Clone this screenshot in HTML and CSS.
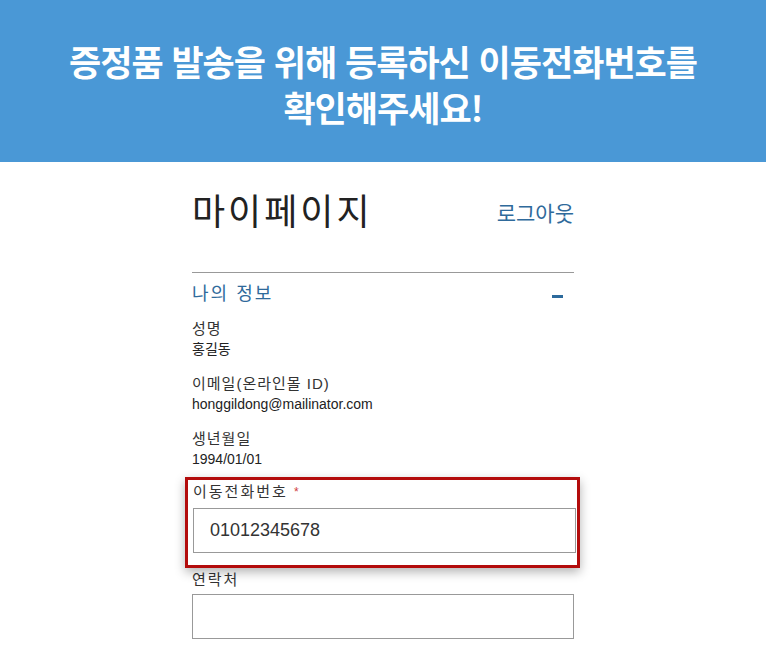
FILE: index.html
```html
<!DOCTYPE html>
<html lang="ko">
<head>
    <meta charset="utf-8">
    <title>마이페이지</title>
    <link rel="stylesheet" href="styles.css">
</head>
<body>
    <div class="banner">
        <h1>증정품 발송을 위해 등록하신 이동전화번호를<br>확인해주세요!</h1>
    </div>

    <div class="container">
        <div class="title-row">
            <h2 class="page-title">마이페이지</h2>
            <a class="logout" href="#">로그아웃</a>
        </div>

        <div class="section-head">
            <span class="section-title">나의 정보</span>
            <span class="toggle"></span>
        </div>

        <div class="info-list">
            <div class="info">
                <div class="info-label">성명</div>
                <div class="info-value">홍길동</div>
            </div>
            <div class="info">
                <div class="info-label">이메일(온라인몰 ID)</div>
                <div class="info-value">honggildong@mailinator.com</div>
            </div>
            <div class="info">
                <div class="info-label">생년월일</div>
                <div class="info-value">1994/01/01</div>
            </div>
        </div>

        <div class="field highlight">
            <label for="mobile">이동전화번호 <span class="required">*</span></label>
            <input type="text" id="mobile" value="01012345678">
        </div>

        <div class="field">
            <label for="phone">연락처</label>
            <input type="text" id="phone">
        </div>
    </div>
</body>
</html>
```

FILE: styles.css
```css
body {
    margin: 0;
    font-family: "Liberation Sans", "Noto Sans CJK KR", sans-serif;
    background-color: #ffffff;
    color: #333333;
}

.banner {
    background-color: #4a98d6;
    height: 162px;
    box-sizing: border-box;
    padding-top: 38px;
}

.banner h1 {
    margin: 0;
    color: #ffffff;
    font-family: "Noto Sans CJK KR", sans-serif;
    font-size: 35px;
    font-weight: 700;
    line-height: 46px;
    letter-spacing: -1px;
    text-align: center;
}

.container {
    width: 382px;
    margin: 0 auto;
}

.title-row {
    display: flex;
    justify-content: space-between;
    align-items: center;
    margin-top: 22px;
    padding-bottom: 38px;
    border-bottom: 1px solid #999999;
}

.page-title {
    margin: 0;
    font-family: "Noto Sans CJK KR", sans-serif;
    font-size: 36px;
    font-weight: 400;
    line-height: 50px;
    letter-spacing: 3px;
    color: #222222;
}

.logout {
    margin-top: 6px;
    font-family: "Noto Sans CJK KR", sans-serif;
    font-size: 21px;
    color: #2f6a9b;
    text-decoration: none;
}

.section-head {
    display: flex;
    justify-content: space-between;
    align-items: center;
    margin-top: 6px;
    line-height: 26px;
}

.section-title {
    font-family: "Noto Sans CJK KR", sans-serif;
    font-size: 18px;
    letter-spacing: 2px;
    color: #2f6a9b;
}

.toggle {
    width: 11px;
    height: 3px;
    margin-right: 11px;
    margin-top: 8px;
    background-color: #2c6a9c;
}

.info-list {
    margin-top: 14px;
}

.info {
    margin-bottom: 15px;
}

.info-label {
    font-size: 15px;
    line-height: 20px;
    letter-spacing: 1px;
    color: #333333;
}

.info-value {
    font-size: 14px;
    line-height: 20px;
    color: #222222;
}

.field label {
    display: block;
    font-size: 15px;
    line-height: 20px;
    letter-spacing: 2px;
    color: #333333;
}

.field input {
    display: block;
    width: 100%;
    height: 45px;
    box-sizing: border-box;
    margin-top: 4px;
    padding: 0 16px;
    border: 1px solid #999999;
    background-color: #ffffff;
    font-family: "Liberation Sans", sans-serif;
    font-size: 18px;
    color: #333333;
    outline: none;
}

.required {
    color: #d03c3c;
    font-size: 12px;
    vertical-align: top;
}

.highlight {
    margin: -7px -6px 2px -7px;
    padding: 2px 1px 12px 5px;
    border: 3px solid #b30c0c;
    box-shadow: 0 4px 10px rgba(0, 0, 0, 0.3);
    background-color: #ffffff;
    position: relative;
}

.highlight input {
    margin-top: 6px;
}
```
